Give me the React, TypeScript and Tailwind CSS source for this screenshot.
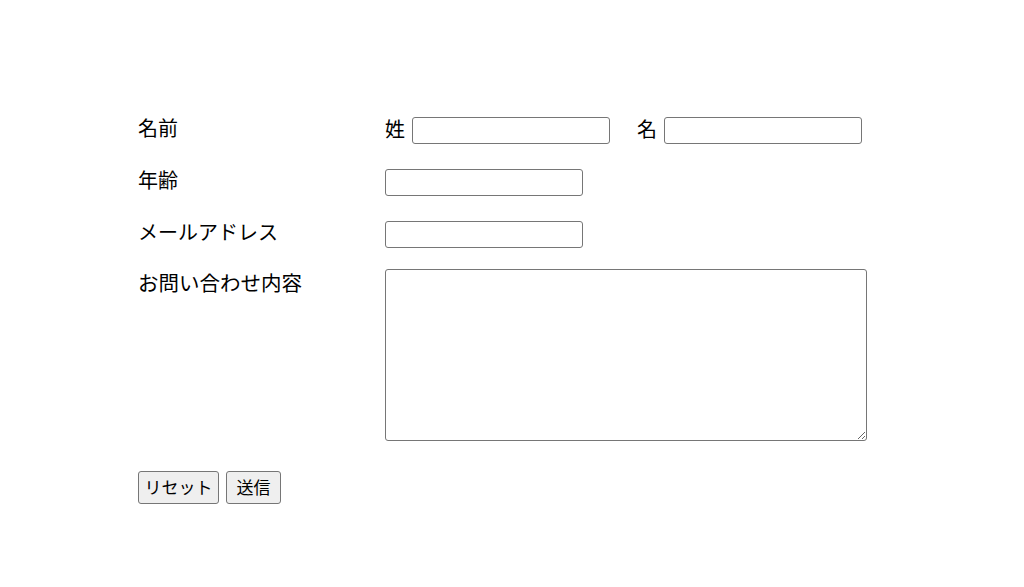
export default function App() {
  const font = { fontFamily: '"Noto Sans CJK JP", "Noto Sans", sans-serif' };
  const field =
    'h-[27px] rounded-[3px] border border-[#767676] bg-white px-1 text-[16px] outline-none';
  const label = 'w-[247px] pb-[5px] text-[20px] leading-[30px]';

  return (
    <div className="min-h-[587px] w-full bg-white text-black" style={font}>
      <form className="flex flex-col pl-[138px] pt-[117px]">
        {/* 名前 */}
        <div className="flex h-[27px] items-center">
          <label className={label}>名前</label>
          <span className="pb-[4px] text-[20px] leading-[30px]">姓</span>
          <input type="text" className={`${field} ml-[7px] w-[198px]`} />
          <span className="ml-[27px] pb-[4px] text-[20px] leading-[30px]">名</span>
          <input type="text" className={`${field} ml-[7px] w-[198px]`} />
        </div>

        {/* 年齢 */}
        <div className="mt-[25px] flex h-[27px] items-center">
          <label className={label}>年齢</label>
          <input type="text" className={`${field} w-[198px]`} />
        </div>

        {/* メールアドレス */}
        <div className="mt-[25px] flex h-[27px] items-center">
          <label className={label}>メールアドレス</label>
          <input type="email" className={`${field} w-[198px]`} />
        </div>

        {/* お問い合わせ内容 */}
        <div className="mt-[21px] flex items-start">
          <label className="-mt-[2px] w-[247px] text-[20.5px] leading-[30px]">お問い合わせ内容</label>
          <textarea className="block h-[172px] w-[482px] rounded-[3px] border border-[#767676] bg-white p-1 text-[16px] outline-none" />
        </div>

        <div className="mt-[30px] flex gap-[7px]">
          <button
            type="reset"
            className="h-[33px] w-[81px] rounded-[3px] border border-[#767676] bg-[#efefef] pb-[3px] text-[17px] leading-none"
          >
            リセット
          </button>
          <button
            type="submit"
            className="h-[33px] w-[55px] rounded-[3px] border border-[#767676] bg-[#efefef] pb-[3px] text-[17px] leading-none"
          >
            送信
          </button>
        </div>
      </form>
    </div>
  );
}
